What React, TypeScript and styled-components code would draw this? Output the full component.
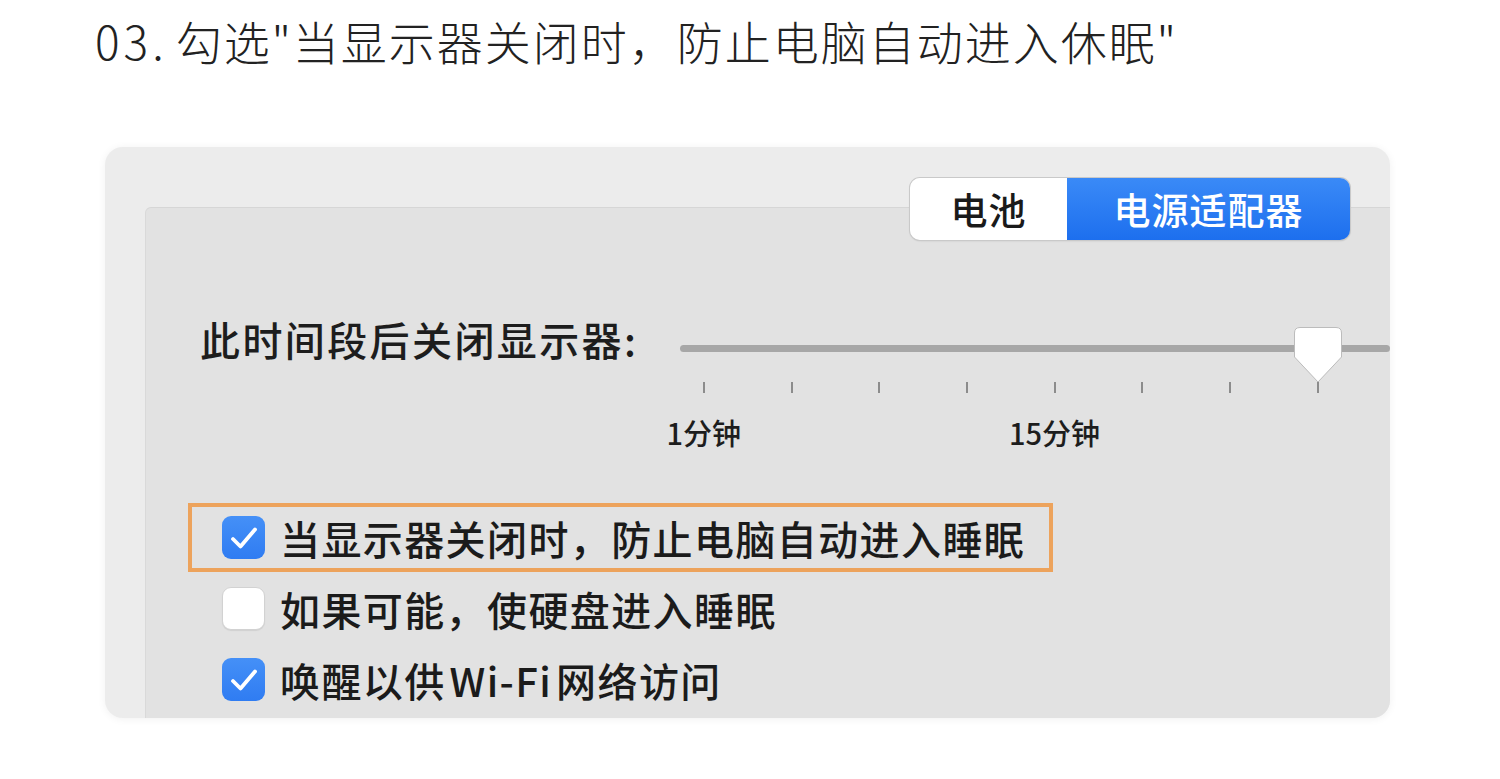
import React from 'react';
import styled, {createGlobalStyle} from 'styled-components';

const CJK = `"Noto Sans CJK SC", "Noto Sans", sans-serif`;

const GlobalStyle = createGlobalStyle`
  html, body {
    margin: 0;
    padding: 0;
    background: #ffffff;
  }
  body {
    font-family: ${CJK};
    color: #1d1d1d;
  }
`;

const Page = styled.div`
  width: 1500px;
  height: 779px;
  overflow: hidden;
  background: #fff;
`;

const Title = styled.h1`
  margin: 10px 0 0 95px;
  font-family: ${CJK};
  font-size: 46px;
  line-height: 60px;
  font-weight: 300;
  color: #222;
  letter-spacing: 2px;
`;

const StepNo = styled.span`
  letter-spacing: 4px;
  margin-right: 8px;
`;

const Panel = styled.div`
  margin: 77px 0 0 105px;
  width: 1285px;
  height: 571px;
  box-sizing: border-box;
  padding: 31px 0 0 40px;
  background: #ececec;
  border-radius: 18px;
  box-shadow: 0 1px 8px rgba(0, 0, 0, 0.06);
  overflow: hidden;
  display: flex;
  flex-direction: column;
`;

const TabRow = styled.div`
  display: flex;
  justify-content: flex-end;
  padding-right: 40px;
  margin-bottom: -33px;
  position: relative;
  z-index: 1;
`;

const Segmented = styled.div`
  display: flex;
  height: 62px;
  border-radius: 10px;
  overflow: hidden;
  box-shadow: 0 0 0 1px #c9c9c9, 0 1px 2px rgba(0, 0, 0, 0.15);
`;

const Segment = styled.div<{$active?: boolean}>`
  width: ${p => (p.$active ? 283 : 157)}px;
  display: flex;
  align-items: center;
  justify-content: center;
  font-size: 37px;
  font-weight: 500;
  letter-spacing: 1px;
  color: ${p => (p.$active ? '#ffffff' : '#1a1a1a')};
  background: ${p => (p.$active ? 'linear-gradient(#3a8af7, #1d6fee)' : '#ffffff')};
`;

const Inner = styled.div`
  flex: 1;
  background: #e2e2e2;
  border-top: 1px solid #d6d6d6;
  border-left: 1px solid #d9d9d9;
  border-top-left-radius: 6px;
  padding: 111px 0 0 42px;
`;

const SliderRow = styled.div`
  display: flex;
  align-items: flex-start;
`;

const FieldLabel = styled.div`
  flex: 0 0 480px;
  margin-left: 12px;
  font-size: 40px;
  line-height: 40px;
  font-weight: 500;
  letter-spacing: 2.4px;
`;

const Slider = styled.div`
  position: relative;
  width: 760px;
  margin-top: 26px;
`;

const Track = styled.div`
  height: 7px;
  border-radius: 4px;
  background: #a7a7a7;
`;

const Thumb = styled.svg`
  position: absolute;
  left: 613px;
  top: -19px;
`;

const Scale = styled.div`
  display: grid;
  grid-template-columns: repeat(8, 87.7px);
  margin: 30px 0 0 -20px;
  row-gap: 25px;
`;

const Tick = styled.span`
  justify-self: center;
  width: 2px;
  height: 11px;
  background: #8c8c8c;
`;

const ScaleLabel = styled.span<{$col: number}>`
  grid-row: 2;
  grid-column: ${p => p.$col};
  justify-self: center;
  white-space: nowrap;
  font-size: 29px;
  line-height: 28px;
  font-weight: 500;
`;

const Options = styled.div`
  display: flex;
  flex-direction: column;
  align-items: flex-start;
  gap: 2px;
  margin-top: 57px;
`;

const OptionRow = styled.label<{$highlight?: boolean}>`
  display: flex;
  align-items: center;
  gap: 15px;
  height: 69px;
  box-sizing: border-box;
  padding: 0 24px 0 30px;
  border: 4px solid ${p => (p.$highlight ? '#eda35c' : 'transparent')};
  font-size: 40px;
  font-weight: 500;
  letter-spacing: 1.4px;
  color: #1b1b1b;
  white-space: nowrap;
`;

const Box = styled.span<{$checked?: boolean}>`
  flex: 0 0 43px;
  height: 43px;
  box-sizing: border-box;
  border-radius: 9px;
  display: flex;
  align-items: center;
  justify-content: center;
  background: ${p => (p.$checked ? 'linear-gradient(#4590f7, #2f7cf2)' : '#ffffff')};
  border: ${p => (p.$checked ? 'none' : '1px solid #d2d2d2')};
  box-shadow: ${p => (p.$checked ? 'none' : '0 1px 1px rgba(0,0,0,0.08)')};
`;

const Check = () => (
  <svg width="28" height="24" viewBox="0 0 28 24">
    <path d="M3 13 L10.5 20.5 L25 3.5" fill="none" stroke="#fff" strokeWidth="3.8" strokeLinecap="round" strokeLinejoin="round" />
  </svg>
);

const options = [
  {text: '当显示器关闭时，防止电脑自动进入睡眠', checked: true, highlight: true},
  {text: '如果可能，使硬盘进入睡眠', checked: false},
  {text: '唤醒以供\u200AWi-Fi\u200A网络访问', checked: true},
];

const scaleLabels = [
  {col: 1, text: '1分钟'},
  {col: 5, text: '15分钟'},
];

const App = () => (
  <Page>
    <GlobalStyle />
    <Title>
      <StepNo>03.</StepNo>勾选"当显示器关闭时，防止电脑自动进入休眠"
    </Title>
    <Panel>
      <TabRow>
        <Segmented>
          <Segment>电池</Segment>
          <Segment $active>电源适配器</Segment>
        </Segmented>
      </TabRow>
      <Inner>
        <SliderRow>
          <FieldLabel>此时间段后关闭显示器:</FieldLabel>
          <Slider>
            <Track />
            <Thumb width="50" height="58" viewBox="0 0 50 58">
              <path
                d="M7 1.5 H43 Q48.5 1.5 48.5 7 V31 L25 56 L1.5 31 V7 Q1.5 1.5 7 1.5 Z"
                fill="#ffffff"
                stroke="#bcbcbc"
                strokeWidth="1"
              />
            </Thumb>
            <Scale>
              {Array.from({length: 8}).map((_, i) => (
                <Tick key={i} />
              ))}
              {scaleLabels.map(l => (
                <ScaleLabel key={l.text} $col={l.col}>
                  {l.text}
                </ScaleLabel>
              ))}
            </Scale>
          </Slider>
        </SliderRow>
        <Options>
          {options.map(o => (
            <OptionRow key={o.text} $highlight={o.highlight}>
              <Box $checked={o.checked}>{o.checked && <Check />}</Box>
              {o.text}
            </OptionRow>
          ))}
        </Options>
      </Inner>
    </Panel>
  </Page>
);

export default App;
